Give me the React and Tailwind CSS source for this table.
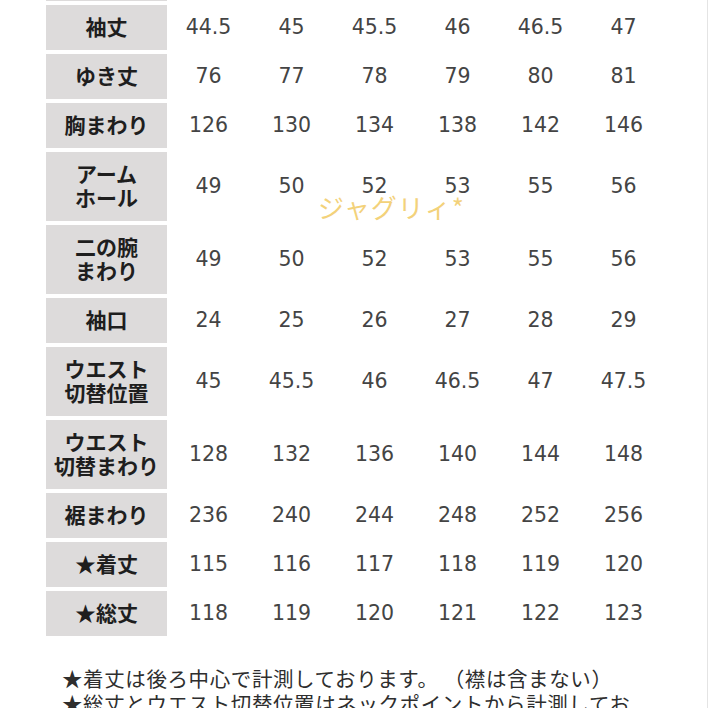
import React from 'react';

const rows = [
  { label: ['袖丈'], values: ['44.5', '45', '45.5', '46', '46.5', '47'] },
  { label: ['ゆき丈'], values: ['76', '77', '78', '79', '80', '81'] },
  { label: ['胸まわり'], values: ['126', '130', '134', '138', '142', '146'] },
  { label: ['アーム', 'ホール'], values: ['49', '50', '52', '53', '55', '56'] },
  { label: ['二の腕', 'まわり'], values: ['49', '50', '52', '53', '55', '56'] },
  { label: ['袖口'], values: ['24', '25', '26', '27', '28', '29'] },
  { label: ['ウエスト', '切替位置'], values: ['45', '45.5', '46', '46.5', '47', '47.5'] },
  { label: ['ウエスト', '切替まわり'], values: ['128', '132', '136', '140', '144', '148'] },
  { label: ['裾まわり'], values: ['236', '240', '244', '248', '252', '256'] },
  { label: ['★着丈'], values: ['115', '116', '117', '118', '119', '120'] },
  { label: ['★総丈'], values: ['118', '119', '120', '121', '122', '123'] },
];

const jp = { fontFamily: '"Noto Sans CJK JP", "Noto Sans", sans-serif' };
const num = { fontFamily: '"DejaVu Sans", Verdana, sans-serif' };

function SizeRow({ label, values }) {
  const tall = label.length > 1;
  return (
    <div className={`flex ${tall ? 'h-[69px]' : 'h-[45px]'}`}>
      <div
        className="w-[121px] bg-[#dddbdb] flex flex-col items-center justify-center pb-[3px] text-[21px] leading-[24px] font-bold text-[#1e1e1e]"
        style={jp}
      >
        {label.map((l) => (
          <span key={l}>{l}</span>
        ))}
      </div>
      {values.map((v, i) => (
        <div
          key={i}
          className="w-[83px] flex items-center justify-center text-[20.5px] text-[#444444]"
          style={num}
        >
          {v}
        </div>
      ))}
    </div>
  );
}

export default function App() {
  return (
    <div className="relative w-[708px] h-[708px] overflow-hidden bg-white border-r border-[#e4e4e4]">
      <div className="ml-[46px] flex flex-col gap-1">
        <div className="w-[121px] h-[1px] bg-[#dddbdb]" />
        {rows.map((r) => (
          <SizeRow key={r.label.join('')} label={r.label} values={r.values} />
        ))}
      </div>

      <div
        className="ml-[62px] mt-[30px] text-[20.5px] leading-[25px] tracking-[0.6px] text-[#2e2e2e] whitespace-nowrap"
        style={jp}
      >
        <div>★着丈は後ろ中心で計測しております。 （襟は含まない）</div>
        <div>★総丈とウエスト切替位置はネックポイントから計測してお</div>
      </div>

      <div
        className="absolute left-[318px] top-[192px] text-[26px] leading-[30px] text-[#f1c75a] opacity-80 tracking-[1px]"
        style={jp}
      >
        ジャグリィ*
      </div>
    </div>
  );
}
